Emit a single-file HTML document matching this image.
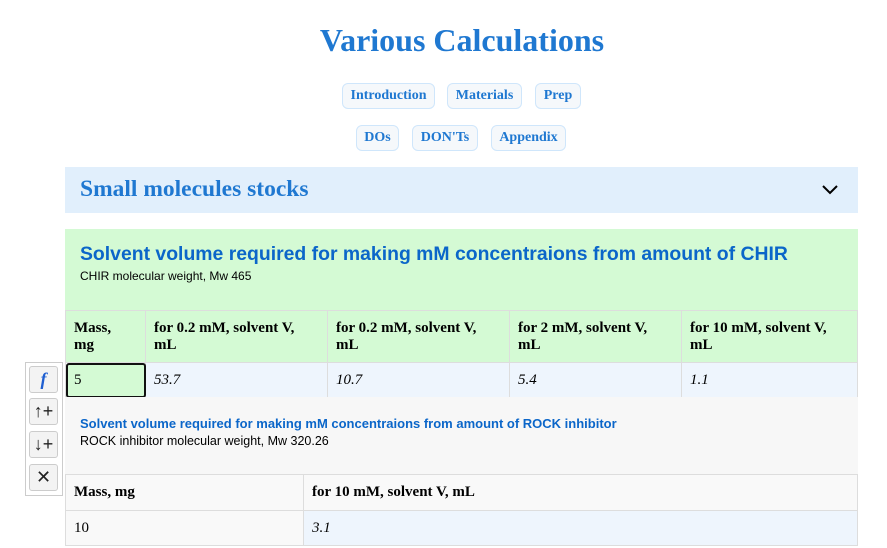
<!DOCTYPE html>
<html><head><meta charset="utf-8"><style>
body{margin:0;width:887px;height:548px;background:#fff;position:relative;overflow:hidden;font-family:"Liberation Serif",serif}
.a{position:absolute;box-sizing:border-box}
h1{position:absolute;margin:0;left:0;width:924px;top:22px;text-align:center;font-size:32px;color:#1f78d1;font-weight:bold}
.b{position:absolute;height:26px;border:1px solid #cfe6fb;border-radius:6px;background:#f5f8fb;color:#1f78d1;font-weight:bold;font-size:14px;line-height:24px;text-align:center;box-sizing:border-box}
.s{font-family:"Liberation Sans",sans-serif}
td{border:1px solid #ddd;padding:0 8px;font-size:15px;vertical-align:middle;box-sizing:border-box}
table{border-collapse:collapse;position:absolute}
.tb{position:absolute;left:29px;width:29px;height:27px;border:1px solid #ccc;border-radius:3px;background:#f3f3f3;box-sizing:border-box;text-align:center;font-size:18px;line-height:25px;font-weight:300;color:#222}
</style></head><body>
<h1>Various Calculations</h1>
<div class="b" style="left:342px;top:83px;width:93px">Introduction</div>
<div class="b" style="left:447px;top:83px;width:75px">Materials</div>
<div class="b" style="left:535px;top:83px;width:46px">Prep</div>
<div class="b" style="left:356px;top:125px;width:43px">DOs</div>
<div class="b" style="left:412px;top:125px;width:66px">DON'Ts</div>
<div class="b" style="left:491px;top:125px;width:75px">Appendix</div>
<div class="a" style="left:65px;top:167px;width:793px;height:46px;background:#e1effc"></div>
<div class="a" style="left:80px;top:176px;font-size:23.5px;font-weight:bold;color:#1f78d1">Small molecules stocks</div>
<svg class="a" style="left:821px;top:184px" width="18" height="12"><path d="M2 2 L9 9 L16 2" stroke="#000" stroke-width="2" fill="none"/></svg>
<div class="a" style="left:65px;top:229px;width:793px;height:82px;background:#d4fad4"></div>
<div class="a s" style="left:80px;top:243px;font-size:19.4px;font-weight:bold;color:#0b66c9">Solvent volume required for making mM concentraions from amount of CHIR</div>
<div class="a s" style="left:80px;top:269px;font-size:12px">CHIR molecular weight, Mw 465</div>
<table style="left:65px;top:310px;width:793px">
<tr style="height:52px;background:#d4fad4"><td style="width:80px;font-weight:bold">Mass,<br>mg</td><td style="width:182px;font-weight:bold">for 0.2 mM, solvent V, mL</td><td style="width:182px;font-weight:bold">for 0.2 mM, solvent V, mL</td><td style="width:172px;font-weight:bold">for 2 mM, solvent V, mL</td><td style="font-weight:bold">for 10 mM, solvent V, mL</td></tr>
<tr style="height:35px;background:#eef5fd;font-style:italic"><td style="background:#d4fad4;font-style:normal;outline:2px solid #111;outline-offset:-2px;border-radius:3px">5</td><td>53.7</td><td>10.7</td><td>5.4</td><td>1.1</td></tr>
</table>
<div class="a" style="left:65px;top:397px;width:793px;height:77px;background:#f7f7f7"></div>
<div class="a s" style="left:80px;top:416px;font-size:13px;font-weight:bold;color:#0b66c9">Solvent volume required for making mM concentraions from amount of ROCK inhibitor</div>
<div class="a s" style="left:80px;top:434px;font-size:12.5px">ROCK inhibitor molecular weight, Mw 320.26</div>
<table style="left:65px;top:474px;width:793px;background:#f9f9f9">
<tr style="height:36px"><td style="width:238px;font-weight:bold">Mass, mg</td><td style="font-weight:bold">for 10 mM, solvent V, mL</td></tr>
<tr style="height:35px"><td>10</td><td style="background:#eef5fd;font-style:italic">3.1</td></tr>
</table>
<div class="a" style="left:25px;top:362px;width:38px;height:134px;border:1px solid #ccc;background:#fff"></div>
<div class="tb" style="top:366px;color:#1f5fd1;font-style:italic;font-weight:bold;font-family:'Liberation Serif',serif">f</div>
<div class="tb s" style="top:398px">↑+</div>
<div class="tb s" style="top:431px">↓+</div>
<div class="tb s" style="top:464px">✕</div>
</body></html>
